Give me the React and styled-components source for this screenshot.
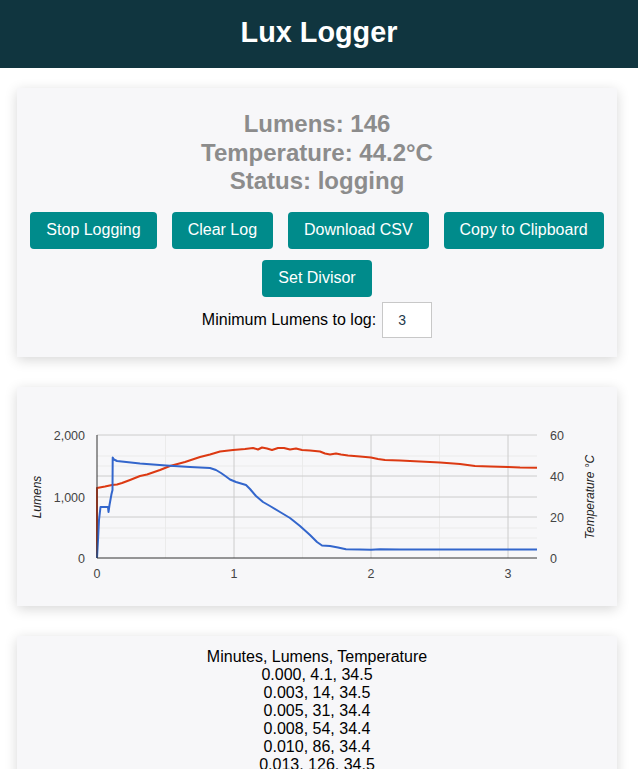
import React from "react";
import styled, {createGlobalStyle} from "styled-components";

const GlobalStyle = createGlobalStyle`
  html, body {
    margin: 0;
    padding: 0;
    background: #fff;
    font-family: "Liberation Sans", Arial, Helvetica, sans-serif;
  }
`;

const Header = styled.header`
  box-sizing: border-box;
  height: 68px;
  padding-bottom: 4px;
  background: #10353f;
  display: flex;
  align-items: center;
  justify-content: center;
`;

const Title = styled.h1`
  margin: 0;
  color: #fff;
  font-size: 28.8px;
  font-weight: bold;
  line-height: 1;
`;

const Main = styled.main`
  padding: 20px 4px 0 0;
`;

const Card = styled.section`
  box-sizing: border-box;
  width: 600px;
  margin: 0 auto 30px;
  background: #f7f7f9;
  box-shadow: 0 3px 12px rgba(0, 0, 0, 0.16);
  padding: ${(p) => p.$pad || "0"};
  text-align: center;
`;

const Readout = styled.div`
  color: #8c8c8c;
  font-size: 24px;
  font-weight: bold;
  line-height: 28.5px;
  margin-bottom: 16px;
`;

const ButtonRow = styled.div`
  display: flex;
  flex-wrap: wrap;
  justify-content: center;
  column-gap: 15px;
  row-gap: 11px;
`;

const Button = styled.button`
  height: 37px;
  padding: 0 16px;
  border: none;
  border-radius: 4px;
  background: #008b8b;
  color: #fff;
  font-family: inherit;
  font-size: 16px;
  cursor: pointer;
`;

const LimitRow = styled.label`
  display: flex;
  align-items: center;
  justify-content: center;
  gap: 6px;
  margin-top: 5px;
  font-size: 16px;
  color: #000;
`;

const LimitInput = styled.input`
  box-sizing: border-box;
  width: 50px;
  height: 36px;
  border: 1px solid #c8c8c8;
  background: #fff;
  padding: 0 0 0 15px;
  font-family: inherit;
  font-size: 14px;
  color: #1e3a4c;
`;

const ChartSvg = styled.svg`
  display: block;
  font-family: "Liberation Sans", Arial, sans-serif;
`;

const LogText = styled.div`
  font-size: 16px;
  line-height: 18px;
  color: #000;
`;

const blue = [
  [97, 558], [98, 540], [99, 520], [100.5, 507], [108, 507], [108.5, 512], [109.5, 505],
  [111.5, 494], [112.5, 490], [112.7, 457.5], [114, 459.5], [117, 461], [140, 463.5],
  [166, 465.5], [190, 467], [210, 468], [216, 470], [221, 473], [226, 476.5], [230, 479.5],
  [236, 482], [246, 485], [250, 489], [256, 496], [263, 502], [270, 506], [280, 512],
  [290, 518], [300, 526], [310, 535], [317, 542], [322, 545.5], [330, 546], [338, 547.5],
  [346, 549.3], [360, 549.5], [371, 549.8], [380, 549.3], [400, 549.5], [537, 549.5],
];

const red = [
  [97, 558], [97, 488], [105, 486.5], [112, 485], [117, 484.5], [122, 483], [130, 480],
  [140, 476], [147, 474.5], [160, 470], [170, 466], [185, 462], [200, 457], [210, 454.5],
  [220, 451.5], [233, 450], [245, 449], [253, 448], [258, 449.5], [262, 447.5], [267, 448.5],
  [272, 450], [278, 448], [284, 448], [290, 449.5], [296, 448.5], [302, 450], [310, 450.5],
  [320, 451.5], [325, 453.5], [330, 454.5], [336, 453.5], [341, 454.5], [348, 455.5],
  [360, 456.5], [371, 457.5], [378, 459], [385, 460], [400, 460.5], [420, 461.5],
  [440, 462.5], [460, 464], [475, 466], [490, 466.5], [508, 467], [520, 467.5], [537, 467.8],
];

const pts = (arr) => arr.map(([x, y]) => `${x},${y}`).join(" ");

const minorY = [456, 466, 528, 538];
const majorY = [435, 476, 497, 517];
const minorX = [165.5, 302.5, 439.5];
const majorX = [234, 371, 508];

function Chart() {
  return (
    <ChartSvg width="600" height="219" viewBox="17 387 600 219">
      {minorY.map((y) => (
        <line key={"my" + y} x1="97" x2="537" y1={y} y2={y} stroke="#ebebeb" />
      ))}
      {minorX.map((x) => (
        <line key={"mx" + x} x1={x} x2={x} y1="435" y2="558" stroke="#ebebeb" />
      ))}
      {majorY.map((y) => (
        <line key={"My" + y} x1="97" x2="537" y1={y} y2={y} stroke="#cccccc" />
      ))}
      {majorX.map((x) => (
        <line key={"Mx" + x} x1={x} x2={x} y1="435" y2="558" stroke="#cccccc" />
      ))}
      <polyline points={pts(red)} fill="none" stroke="#dc3912" strokeWidth="2" strokeLinejoin="round" />
      <polyline points={pts(blue)} fill="none" stroke="#3366cc" strokeWidth="2" strokeLinejoin="round" />
      <line x1="97" x2="537" y1="558" y2="558" stroke="#333" />
      <line x1="97" x2="97" y1="435" y2="558" stroke="#333" />

      <g fontSize="12.5" fill="#444">
        <text x="85" y="440" textAnchor="end">2,000</text>
        <text x="85" y="502" textAnchor="end">1,000</text>
        <text x="85" y="563" textAnchor="end">0</text>
        <text x="550" y="440">60</text>
        <text x="550" y="481">40</text>
        <text x="550" y="522">20</text>
        <text x="550" y="563">0</text>
        <text x="97" y="578" textAnchor="middle">0</text>
        <text x="234" y="578" textAnchor="middle">1</text>
        <text x="371" y="578" textAnchor="middle">2</text>
        <text x="508" y="578" textAnchor="middle">3</text>
      </g>
      <g fontSize="12" fill="#222" fontStyle="italic">
        <text transform="translate(41 497) rotate(-90)" textAnchor="middle">Lumens</text>
        <text transform="translate(594 497) rotate(-90)" textAnchor="middle">Temperature °C</text>
      </g>
    </ChartSvg>
  );
}

const log = [
  "Minutes, Lumens, Temperature",
  "0.000, 4.1, 34.5",
  "0.003, 14, 34.5",
  "0.005, 31, 34.4",
  "0.008, 54, 34.4",
  "0.010, 86, 34.4",
  "0.013, 126, 34.5",
];

export default function App() {
  return (
    <>
      <GlobalStyle />
      <Header>
        <Title>Lux Logger</Title>
      </Header>
      <Main>
        <Card $pad="22px 10px 19px">
          <Readout>
            <div>Lumens: 146</div>
            <div>Temperature: 44.2°C</div>
            <div>Status: logging</div>
          </Readout>
          <ButtonRow>
            <Button>Stop Logging</Button>
            <Button>Clear Log</Button>
            <Button>Download CSV</Button>
            <Button>Copy to Clipboard</Button>
            <Button>Set Divisor</Button>
          </ButtonRow>
          <LimitRow>
            Minimum Lumens to log:
            <LimitInput type="text" defaultValue="3" />
          </LimitRow>
        </Card>
        <Card>
          <Chart />
        </Card>
        <Card $pad="12px 10px 20px">
          <LogText>
            {log.map((line) => (
              <div key={line}>{line}</div>
            ))}
          </LogText>
        </Card>
      </Main>
    </>
  );
}
